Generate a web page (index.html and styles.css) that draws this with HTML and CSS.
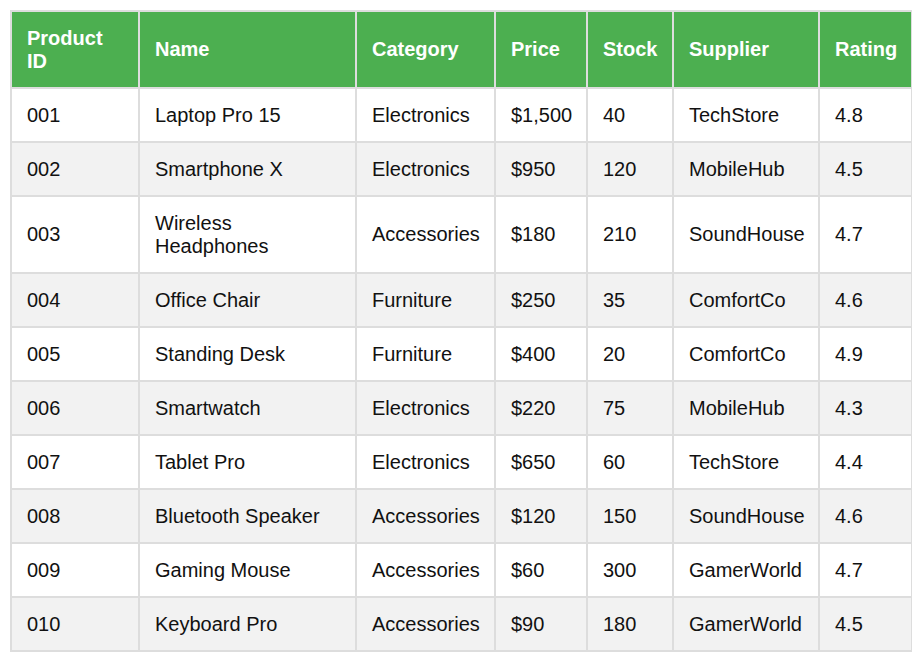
FILE: index.html
```html
<!DOCTYPE html>
<html>
<head>
<meta charset="utf-8">
<link rel="stylesheet" href="styles.css">
</head>
<body>
<table class="products">
  <colgroup>
    <col class="c-id"><col class="c-name"><col class="c-cat"><col class="c-price"><col class="c-stock"><col class="c-sup"><col class="c-rate">
  </colgroup>
  <thead>
    <tr><th>Product ID</th><th>Name</th><th>Category</th><th>Price</th><th>Stock</th><th>Supplier</th><th>Rating</th></tr>
  </thead>
  <tbody>
    <tr><td>001</td><td>Laptop Pro 15</td><td>Electronics</td><td>$1,500</td><td>40</td><td>TechStore</td><td>4.8</td></tr>
    <tr><td>002</td><td>Smartphone X</td><td>Electronics</td><td>$950</td><td>120</td><td>MobileHub</td><td>4.5</td></tr>
    <tr><td>003</td><td>Wireless Headphones</td><td>Accessories</td><td>$180</td><td>210</td><td>SoundHouse</td><td>4.7</td></tr>
    <tr><td>004</td><td>Office Chair</td><td>Furniture</td><td>$250</td><td>35</td><td>ComfortCo</td><td>4.6</td></tr>
    <tr><td>005</td><td>Standing Desk</td><td>Furniture</td><td>$400</td><td>20</td><td>ComfortCo</td><td>4.9</td></tr>
    <tr><td>006</td><td>Smartwatch</td><td>Electronics</td><td>$220</td><td>75</td><td>MobileHub</td><td>4.3</td></tr>
    <tr><td>007</td><td>Tablet Pro</td><td>Electronics</td><td>$650</td><td>60</td><td>TechStore</td><td>4.4</td></tr>
    <tr><td>008</td><td>Bluetooth Speaker</td><td>Accessories</td><td>$120</td><td>150</td><td>SoundHouse</td><td>4.6</td></tr>
    <tr><td>009</td><td>Gaming Mouse</td><td>Accessories</td><td>$60</td><td>300</td><td>GamerWorld</td><td>4.7</td></tr>
    <tr><td>010</td><td>Keyboard Pro</td><td>Accessories</td><td>$90</td><td>180</td><td>GamerWorld</td><td>4.5</td></tr>
  </tbody>
</table>
</body>
</html>
```
FILE: styles.css
```css
body {
  margin: 10px;
  background: #ffffff;
  font-family: "Liberation Sans", Arial, sans-serif;
}
.products {
  width: 903px;
  table-layout: fixed;
  border-collapse: collapse;
  font-size: 20px;
  color: #111;
}
.c-id { width: 128px; }
.c-name { width: 217px; }
.c-cat { width: 139px; }
.c-price { width: 92px; }
.c-stock { width: 86px; }
.c-sup { width: 146px; }
.c-rate { width: 93px; }
.products th,
.products td {
  border: 2px solid #dddddd;
  padding: 14.5px 15px;
  text-align: left;
}
.products th {
  background: #4caf50;
  color: #ffffff;
  font-weight: bold;
}
.products tbody tr:nth-child(even) {
  background: #f2f2f2;
}
```
